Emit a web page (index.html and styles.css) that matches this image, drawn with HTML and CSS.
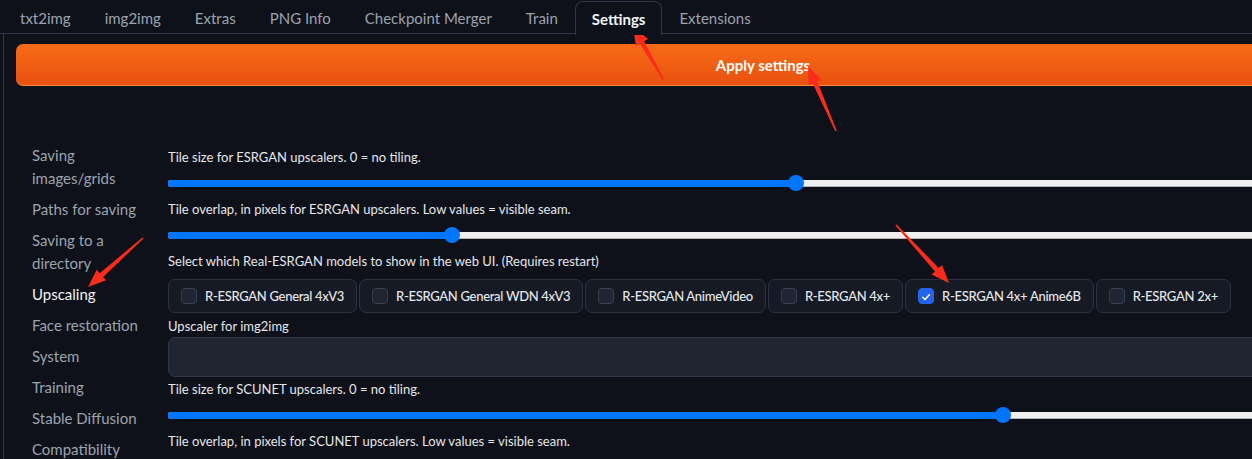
FILE: index.html
```html
<!DOCTYPE html>
<html lang="en">
<head>
<meta charset="utf-8">
<title>Settings</title>
<link rel="stylesheet" href="styles.css">
</head>
<body>
<div class="app">
  <div class="tabs">
    <button class="tab">txt2img</button>
    <button class="tab">img2img</button>
    <button class="tab">Extras</button>
    <button class="tab">PNG Info</button>
    <button class="tab">Checkpoint Merger</button>
    <button class="tab">Train</button>
    <button class="tab selected">Settings</button>
    <button class="tab">Extensions</button>
  </div>
  <div class="panel">
    <button class="apply">Apply settings</button>
    <div class="settings">
      <nav class="side">
        <div class="side-item">Saving images/grids</div>
        <div class="side-item">Paths for saving</div>
        <div class="side-item">Saving to a directory</div>
        <div class="side-item active">Upscaling</div>
        <div class="side-item">Face restoration</div>
        <div class="side-item">System</div>
        <div class="side-item">Training</div>
        <div class="side-item">Stable Diffusion</div>
        <div class="side-item">Compatibility</div>
      </nav>
      <div class="content">
        <div class="label">Tile size for ESRGAN upscalers. 0 = no tiling.</div>
        <div class="slider"><div class="track"><div class="fill" style="width:628px"></div></div></div>
        <div class="label">Tile overlap, in pixels for ESRGAN upscalers. Low values = visible seam.</div>
        <div class="slider"><div class="track"><div class="fill" style="width:284px"></div></div></div>
        <div class="label">Select which Real-ESRGAN models to show in the web UI. (Requires restart)</div>
        <div class="chips">
          <label class="chip"><span class="box"></span>R-ESRGAN General 4xV3</label>
          <label class="chip"><span class="box"></span>R-ESRGAN General WDN 4xV3</label>
          <label class="chip"><span class="box"></span>R-ESRGAN AnimeVideo</label>
          <label class="chip"><span class="box"></span>R-ESRGAN 4x+</label>
          <label class="chip"><span class="box checked"><svg viewBox="0 0 16 16" width="16" height="16"><path d="M4.2 8.3 L6.9 10.9 L11.8 5.4" fill="none" stroke="#fff" stroke-width="1.8" stroke-linecap="round" stroke-linejoin="round"/></svg></span>R-ESRGAN 4x+ Anime6B</label>
          <label class="chip"><span class="box"></span>R-ESRGAN 2x+</label>
        </div>
        <div class="label label-tight">Upscaler for img2img</div>
        <div class="dropdown"></div>
        <div class="label label-low">Tile size for SCUNET upscalers. 0 = no tiling.</div>
        <div class="slider"><div class="track"><div class="fill" style="width:835px"></div></div></div>
        <div class="label">Tile overlap, in pixels for SCUNET upscalers. Low values = visible seam.</div>
      </div>
    </div>
  </div>
  <svg class="marks" width="1252" height="459" viewBox="0 0 1252 459">
    <polygon points="663.7,78.6 644.2,41.35 648.1,39.1 633,27 635.9,46.1 639.8,43.85 662.3,79.4"/>
    <polygon points="836.73,130.68 817.42,81.54 821.55,79.76 808,66 808.69,85.30 812.82,83.52 835.27,131.32"/>
    <polygon points="142.47,237.40 99.78,273.16 96.78,269.80 88,287 106.10,280.26 103.10,276.90 143.53,238.60"/>
    <polygon points="895.41,225.54 935.01,271.40 931.69,274.43 949,283 942.03,264.99 938.71,268.02 896.59,224.46"/>
  </svg>
</div>
</body>
</html>
```

FILE: styles.css
```css
html, body {
  margin: 0;
  padding: 0;
  background: #0e1119;
  overflow: hidden;
}
body {
  font-family: "Source Sans Pro", Lato, "Liberation Sans", sans-serif;
  color: #e5e7eb;
}
.app {
  position: relative;
  width: 1520px;
  height: 459px;
}
.tabs {
  display: flex;
  padding-left: 3px;
  height: 33px;
  border-bottom: 1px solid #30374a;
  box-sizing: content-box;
}
.tab {
  background: none;
  border: 1px solid transparent;
  border-bottom: none;
  margin-top: 1px;
  height: 33px;
  padding: 0 16px;
  font-family: inherit;
  font-size: 15px;
  color: #9ca3af;
  cursor: pointer;
  border-radius: 8px 8px 0 0;
}
.tab.selected {
  border-color: #30374a;
  background: #0e1119;
  color: #f3f4f6;
  font-weight: 700;
  margin-bottom: -1px;
  height: 34px;
  position: relative;
  z-index: 1;
}
.panel {
  margin-left: 3px;
  border-left: 1px solid #30374a;
  padding-top: 10px;
  height: 415px;
}
.apply {
  display: block;
  margin-left: 12px;
  width: 1494px;
  height: 42px;
  border: none;
  border-bottom: 1px solid #fb8a3c;
  border-radius: 7px;
  background: linear-gradient(to bottom, #f76b18, #e8520f);
  color: #ffffff;
  font-family: inherit;
  font-weight: 700;
  font-size: 15px;
}
.settings {
  display: flex;
  margin-top: 58px;
  padding-left: 28px;
}
.side {
  width: 120px;
  flex: none;
  margin-right: 16px;
  font-size: 15px;
  line-height: 23px;
  color: #9ca3af;
}
.side-item {
  margin-bottom: 8px;
}
.side-item:nth-child(4),
.side-item:nth-child(5) {
  margin-top: 1px;
}
.side-item.active {
  color: #f3f4f6;
}
.content {
  flex: 1;
  padding-top: 3px;
}
.label {
  font-size: 13px;
  line-height: 20px;
  height: 20px;
  color: #e5e7eb;
  white-space: nowrap;
}
.label-tight {
  margin-top: 3px;
}
.label-low {
  margin-top: 2px;
}
.slider {
  height: 32px;
  display: flex;
  align-items: center;
}
.track {
  width: 100%;
  height: 6px;
  background: #efefef;
  border-bottom: 1px solid #b4b4b4;
  border-radius: 3px;
  display: flex;
}
.fill {
  position: relative;
  height: 7px;
  margin-bottom: -1px;
  background: #0075ff;
  border-radius: 3px 0 0 3px;
}
.fill::after {
  content: "";
  position: absolute;
  right: -8px;
  top: 50%;
  width: 16px;
  height: 16px;
  margin-top: -8px;
  border-radius: 50%;
  background: #0075ff;
}
.chips {
  display: flex;
  gap: 2px;
  margin-top: 8px;
}
.chip {
  display: flex;
  align-items: center;
  gap: 8px;
  height: 34px;
  box-sizing: border-box;
  padding: 0 12px;
  border: 1px solid #2b3242;
  border-radius: 7px;
  background: #151a24;
  font-size: 13px;
  font-weight: 500;
  letter-spacing: -0.3px;
  color: #e5e7eb;
}
.box {
  width: 16px;
  height: 16px;
  box-sizing: border-box;
  border: 1px solid #374151;
  border-radius: 4px;
  background: #1f2533;
  display: flex;
}
.box.checked {
  background: #2563eb;
  border-color: #2563eb;
}
.dropdown {
  margin-top: 1px;
  height: 40px;
  box-sizing: border-box;
  border: 1px solid #30374a;
  border-radius: 7px;
  background: #1f2531;
}
.marks {
  position: absolute;
  left: 0;
  top: 0;
  pointer-events: none;
}
.marks polygon {
  fill: #fb2d1a;
}
```
